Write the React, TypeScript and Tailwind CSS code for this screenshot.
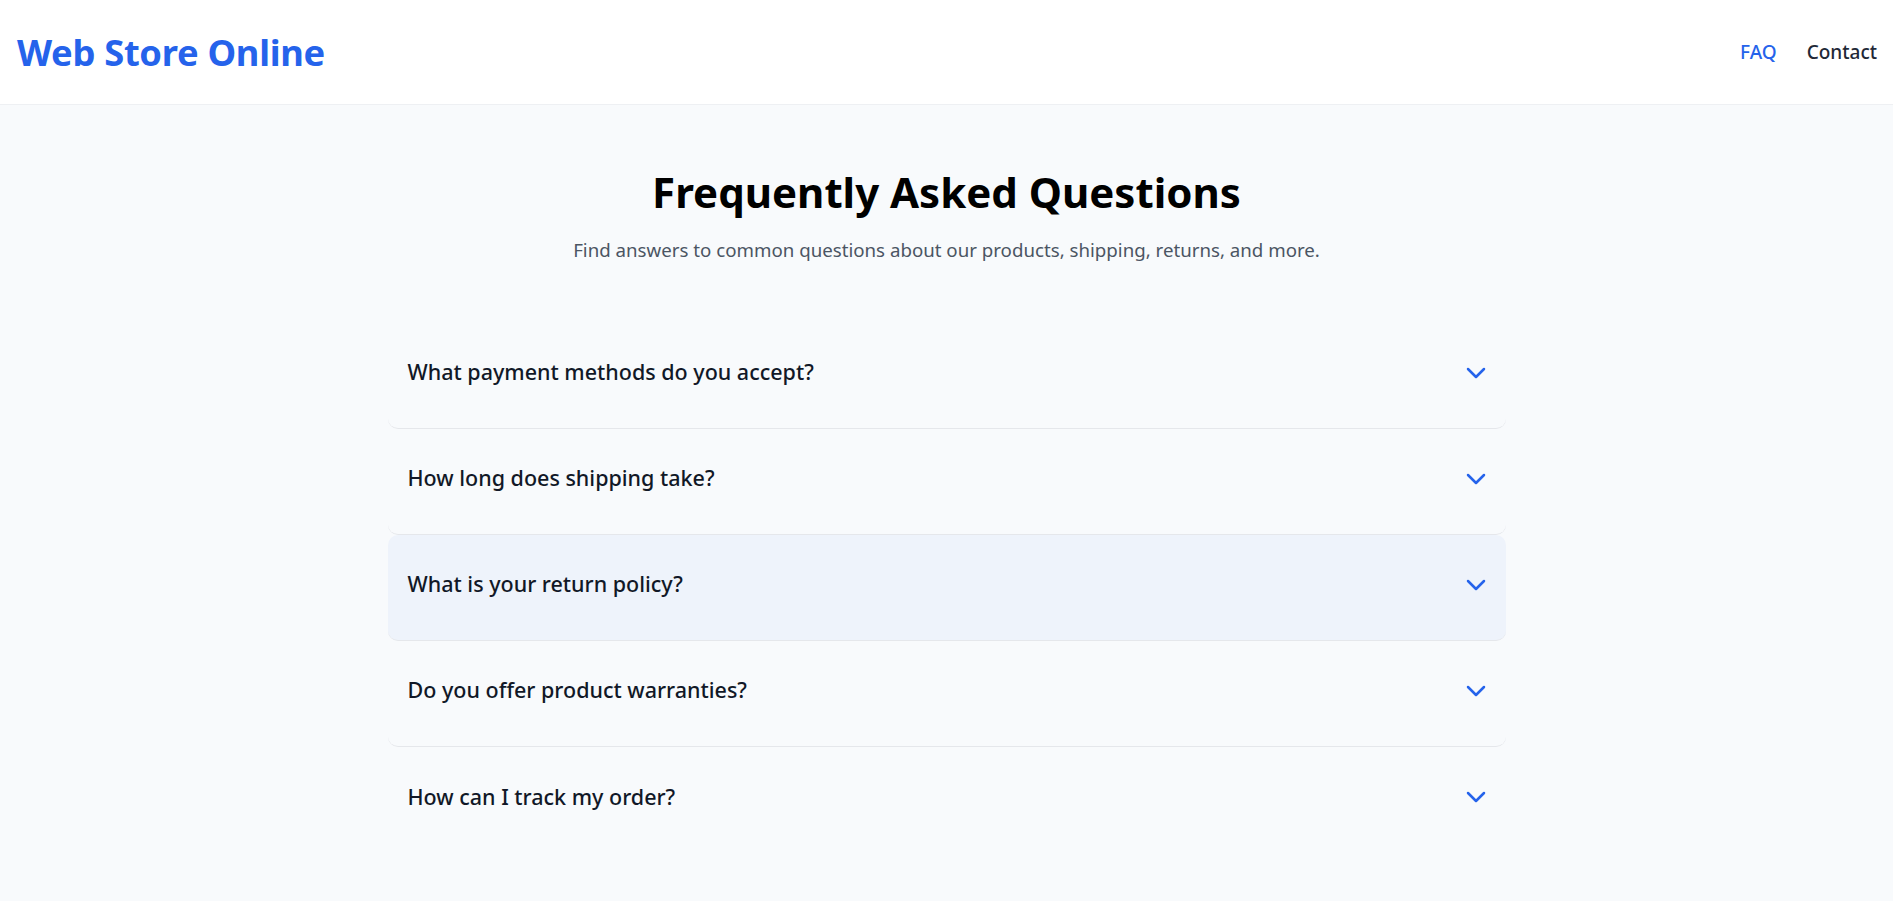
import React from "react";

const questions = [
  "What payment methods do you accept?",
  "How long does shipping take?",
  "What is your return policy?",
  "Do you offer product warranties?",
  "How can I track my order?",
];

function Chevron() {
  return (
    <svg width="20" height="12" viewBox="0 0 20 12" fill="none" className="shrink-0 -translate-y-[3px]">
      <polyline
        points="2,2 10,10 18,2"
        stroke="#2563eb"
        strokeWidth="2.5"
        strokeLinecap="round"
        strokeLinejoin="round"
      />
    </svg>
  );
}

export default function App() {
  return (
    <div
      className="min-h-screen bg-[#f8fafc]"
      style={{ fontFamily: '"Noto Sans", "Open Sans", sans-serif' }}
    >
      <header className="h-[105px] bg-white border-b border-[#eef0f3] flex items-center justify-between pl-[17px] pr-[16px]">
        <div className="text-[36.3px] font-bold text-[#2563eb] tracking-[-0.3px]">Web Store Online</div>
        <nav className="flex items-center gap-[30px] text-[19px] font-medium">
          <a className="text-[#2563eb]">FAQ</a>
          <a className="text-[#1f2937]">Contact</a>
        </nav>
      </header>
      <main className="pt-[59px]">
        <div className="text-center">
          <h1 className="text-[42px] leading-[56px] font-bold text-black">Frequently Asked Questions</h1>
          <p className="mt-[16px] text-[18.7px] leading-[28px] text-[#4b5563]">
            Find answers to common questions about our products, shipping, returns, and more.
          </p>
        </div>
        <div className="w-[1118px] mx-auto mt-[59px] flex flex-col divide-y divide-[#e5e7eb]">
          {questions.map((q, i) => (
            <div
              key={q}
              className={`h-[106px] rounded-[10px] flex items-center justify-between px-[20px] ${
                i === 2 ? "bg-[#eef3fb]" : ""
              }`}
            >
              <span className="text-[21.5px] font-medium text-[#111827] -translate-y-[3px]">{q}</span>
              <Chevron />
            </div>
          ))}
        </div>
      </main>
    </div>
  );
}
